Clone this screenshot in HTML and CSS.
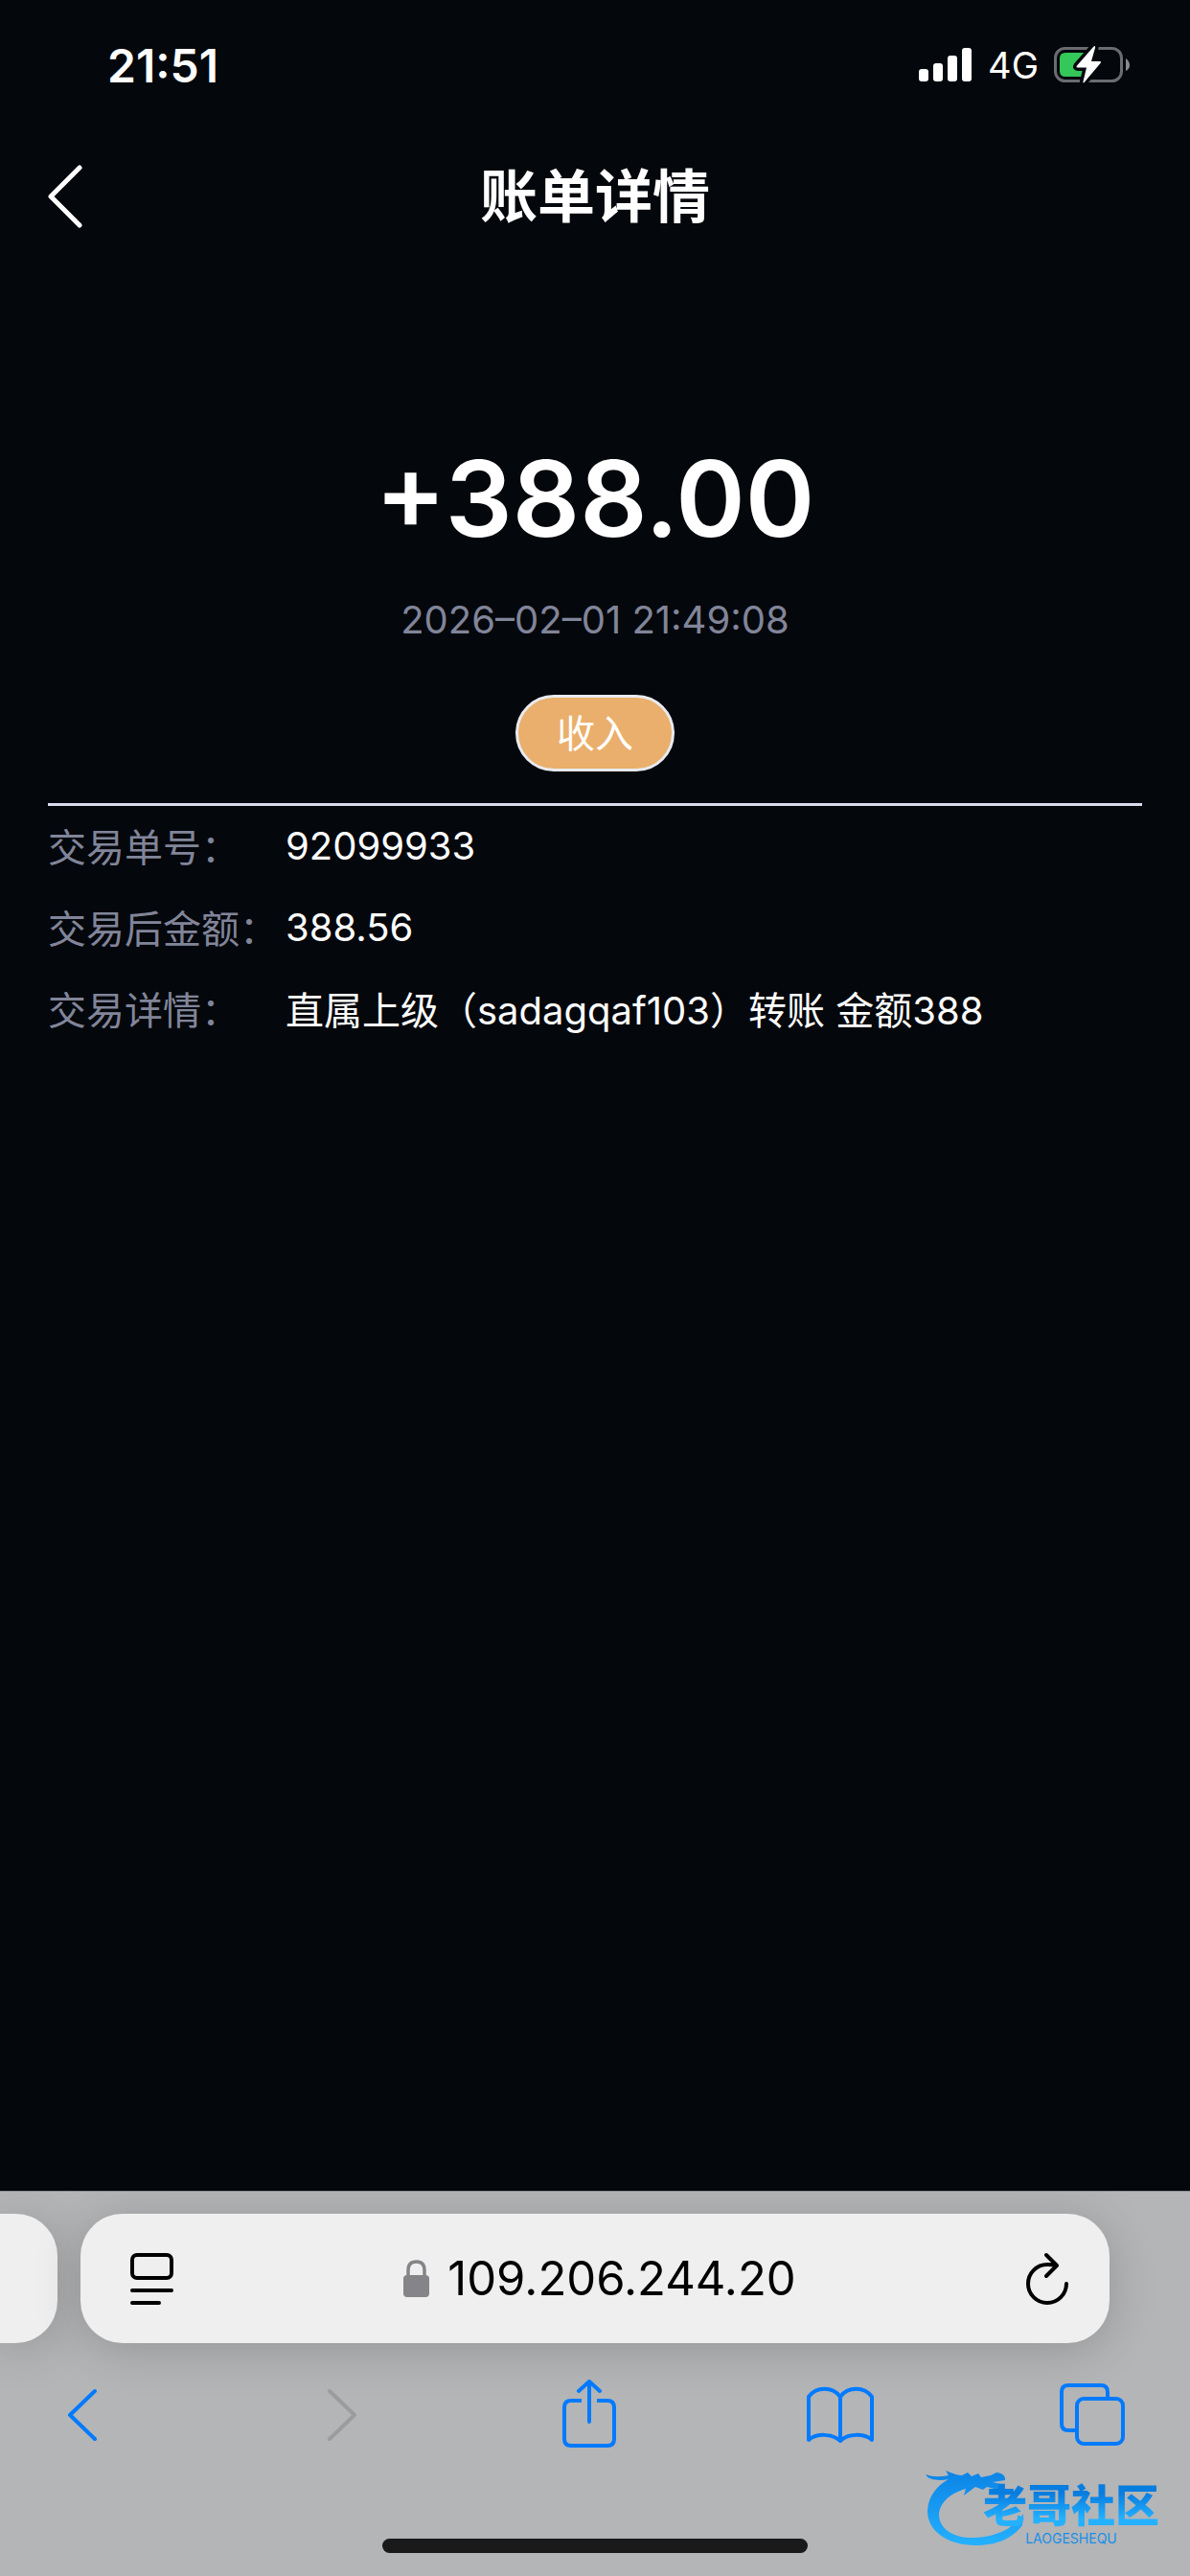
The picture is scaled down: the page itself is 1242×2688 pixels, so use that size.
FILE: index.html
```html
<!DOCTYPE html>
<html lang="zh-CN">
<head>
<meta charset="utf-8">
<meta name="viewport" content="width=device-width, initial-scale=1">
<title>账单详情</title>
<link rel="stylesheet" href="styles.css">
</head>
<body>
<div class="screen">
  <div class="status">
    <time class="clock">21:51</time>
    <div class="indicators">
      <svg class="signal" width="56" height="36" viewBox="0 0 56 36" fill="#fff" aria-hidden="true">
        <rect x="0" y="22" width="10" height="13" rx="3"/><rect x="15" y="16" width="10" height="19" rx="3"/><rect x="30" y="8" width="10" height="27" rx="3"/><rect x="45" y="0" width="10" height="35" rx="3"/>
      </svg>
      <span class="network">4G</span>
      <svg width="80" height="40" viewBox="0 0 80 40" aria-hidden="true">
        <rect x="1.5" y="2.5" width="69" height="34" rx="10" fill="none" stroke="#6b6c70" stroke-width="3"/>
        <path d="M75 13q4 3 4 7t-4 6z" fill="#8a8b8e"/>
        <path d="M12 7H36V32H12q-6 0-6-6V13q0-6 6-6z" fill="#34c759"/>
        <path d="M41.500 .5 24 20.500q-1.500 2 1 2h9L30.500 37q-.5 2.500 1.500 .5L48.500 18q1.500-2-1-2H39L43 2q.5-3-1.500-1.500z" fill="#fff" stroke="#04070c" stroke-width="7" paint-order="stroke"/>
      </svg>
    </div>
  </div>
  <header class="nav">
    <button class="nav-back" type="button" aria-label="返回">
      <svg width="38" height="68" viewBox="0 0 38 68" fill="none" stroke="#fff" stroke-width="5" stroke-linecap="round" stroke-linejoin="round"><path d="M33 4 3 34 33 64"/></svg>
    </button>
    <h1 class="title">账单详情</h1>
  </header>
  <main class="content">
    <section class="summary">
      <p class="amount">+388.00</p>
      <time class="date">2026–02–01 21:49:08</time>
      <button class="tag" type="button">收入</button>
    </section>
    <dl class="details">
      <div class="row"><dt>交易单号：</dt><dd>92099933</dd></div>
      <div class="row"><dt>交易后金额：</dt><dd>388.56</dd></div>
      <div class="row"><dt>交易详情：</dt><dd>直属上级（sadagqaf103）转账 金额388</dd></div>
    </dl>
  </main>
  <footer class="browser">
    <div class="tabs">
      <div class="tab-prev"></div>
      <div class="address">
        <button class="icon-button" type="button" aria-label="页面菜单">
          <svg width="46" height="56" viewBox="0 0 46 56" fill="none" stroke="#000" stroke-width="4" stroke-linecap="round"><rect x="2" y="3" width="41" height="24" rx="5"/><path d="M2 40H43M2 53H30"/></svg>
        </button>
        <a class="url" href="#">
          <svg width="28" height="40" viewBox="0 0 28 40" aria-hidden="true"><rect x="0" y="16" width="27" height="23" rx="4" fill="#858489"/><path d="M5 18V11Q5 2 13.500 2T22 11V18" fill="none" stroke="#858489" stroke-width="3.500"/></svg>
          <span>109.206.244.20</span>
        </a>
        <button class="icon-button" type="button" aria-label="重新载入">
          <svg width="46" height="56" viewBox="0 0 46 56" fill="none" stroke="#000" stroke-width="4" stroke-linecap="round" stroke-linejoin="round"><path d="M43 33A20 20 0 1 1 23 13Q28 13 33 14M22 3 33 14 22 25"/></svg>
        </button>
      </div>
    </div>
    <nav class="toolbar">
      <button class="tool" type="button" aria-label="后退"><svg viewBox="0 0 72 72"><path d="M49 12 23 37 49 62"/></svg></button>
      <button class="tool tool-off" type="button" aria-label="前进" disabled><svg viewBox="0 0 72 72"><path d="M30 12 56 37 30 62"/></svg></button>
      <button class="tool" type="button" aria-label="分享"><svg viewBox="0 0 72 72"><path stroke-linecap="butt" d="M30 22H19Q12 22 12 29V62Q12 69 19 69H57Q64 69 64 62V29Q64 22 57 22H46"/><path d="M38 44V2M27 12 38 2 49 12"/></svg></button>
      <button class="tool" type="button" aria-label="书签"><svg viewBox="0 0 72 72"><path d="M36 18C28 7 11 7 3 18V63C11 56 27 56 36 64 44 56 61 56 69 63V18C61 7 44 7 36 18V64"/></svg></button>
      <button class="tool" type="button" aria-label="标签页"><svg viewBox="0 0 72 72"><rect x="20" y="20" width="48" height="47" rx="7"/><path stroke-linecap="butt" d="M52 19V13Q52 6 45 6H11Q4 6 4 13V46Q4 53 11 53H19"/></svg></button>
    </nav>
    <div class="home"></div>
    <div class="brand">
      <svg class="brand-mark" viewBox="0 0 110 92" aria-hidden="true">
        <defs><linearGradient id="blue" x1="0" y1="0" x2="0" y2="1"><stop offset="0" stop-color="#0b83e6"/><stop offset="1" stop-color="#24b1ff"/></linearGradient></defs>
        <path fill="url(#blue)" d="M6 14Q16 18 30 15L27 10Q38 15 44 15L50 12 54 16 61 13 64 17 74 15 80 12Q90 13 89 20L76 22 88 25 86 31 70 27 66 30 58 27 46 36 48 29C30 34 20 45 20 57 21 72 37 81 57 80 82 79 99 69 108 55L107 67C96 82 78 88 59 88 30 88 8 74 8 52 9 36 18 26 30 19 20 21 9 20 6 14z"/>
      </svg>
      <div class="brand-text"><strong>老哥社区</strong><small>LAOGESHEQU</small></div>
    </div>
  </footer>
</div>
</body>
</html>
```
FILE: styles.css
```css
* { box-sizing: border-box; }
body, h1, p, dl, dd { margin: 0; }
body {
  background: #04070c;
  color: #fff;
  font-family: Inter, "Noto Sans CJK SC", sans-serif;
  font-size: 40px;
}
button {
  margin: 0;
  padding: 0;
  border: 0;
  background: none;
  color: inherit;
  font: inherit;
}
svg { display: block; }
.screen {
  display: flex;
  flex-direction: column;
  min-height: 100vh;
}

.status {
  display: flex;
  align-items: center;
  justify-content: space-between;
  height: 136px;
  padding: 0 62px 0 112px;
}
.clock { font-size: 48px; font-weight: 600; }
.indicators { display: flex; align-items: center; gap: 16px; }
.network { font-size: 38px; }

.nav {
  display: grid;
  grid-template-columns: 1fr auto 1fr;
  align-items: center;
  height: 138px;
  padding: 0 50px;
}
.nav-back { justify-self: start; }
.title { font-size: 60px; line-height: 80px; font-weight: 700; }

.content { flex: 1; padding: 0 50px; }
.summary {
  display: flex;
  flex-direction: column;
  align-items: center;
  padding: 178px 0 33px;
  border-bottom: 3px solid #d9dcea;
}
.amount { font-size: 110px; line-height: 136px; font-weight: 600; }
.date { margin-top: 34px; line-height: 50px; color: #818599; }
.tag {
  margin-top: 53px;
  width: 166px;
  height: 80px;
  padding-bottom: 4px;
  border: 3px solid #e8eaef;
  border-radius: 40px;
  background: #eaaf6c;
}
.row {
  display: flex;
  align-items: center;
  height: 85px;
  padding-bottom: 3px;
}
.row dt { width: 248px; color: #818599; white-space: nowrap; }

.browser {
  position: relative;
  padding-top: 23px;
  border-top: 1px solid #8e8f91;
  background: #b4b5b7;
  overflow: hidden;
}
.tabs { display: flex; gap: 24px; padding-right: 84px; }
.tab-prev, .address {
  height: 135px;
  background: #efefef;
  box-shadow: 0 6px 50px rgba(0, 0, 0, .18);
}
.tab-prev { width: 60px; border-radius: 0 44px 44px 0; }
.address {
  flex: 1;
  display: flex;
  align-items: center;
  justify-content: space-between;
  padding: 0 42px 0 52px;
  border-radius: 44px;
}
.url {
  display: flex;
  align-items: center;
  gap: 18px;
  color: #000;
  font-size: 49px;
  text-decoration: none;
}
.toolbar {
  display: flex;
  justify-content: space-between;
  padding: 38px 66px 0 50px;
}
.tool { width: 72px; height: 72px; }
.tool svg {
  width: 72px;
  height: 72px;
  fill: none;
  stroke: #007aff;
  stroke-width: 4;
  stroke-linecap: round;
  stroke-linejoin: round;
}
.tool-off svg { stroke: #9b9c9e; }
.home {
  width: 444px;
  height: 15px;
  margin: 94px auto 24px;
  border-radius: 8px;
  background: #1a1a1a;
}
.brand {
  position: absolute;
  right: 18px;
  bottom: 28px;
  width: 264px;
  height: 92px;
}
.brand-mark { width: 110px; height: 92px; }
.brand-text {
  position: absolute;
  right: 0;
  top: 22px;
  width: 212px;
  display: flex;
  flex-direction: column;
  align-items: center;
  gap: 4px;
  color: #168fe8;
}
.brand-text strong {
  font-size: 46px;
  line-height: 48px;
  font-weight: 900;
  background: linear-gradient(#087de0 25%, #24b1ff 80%);
  background-clip: text;
  color: transparent;
}
.brand-text small { font-size: 14px; line-height: 14px; }
```
